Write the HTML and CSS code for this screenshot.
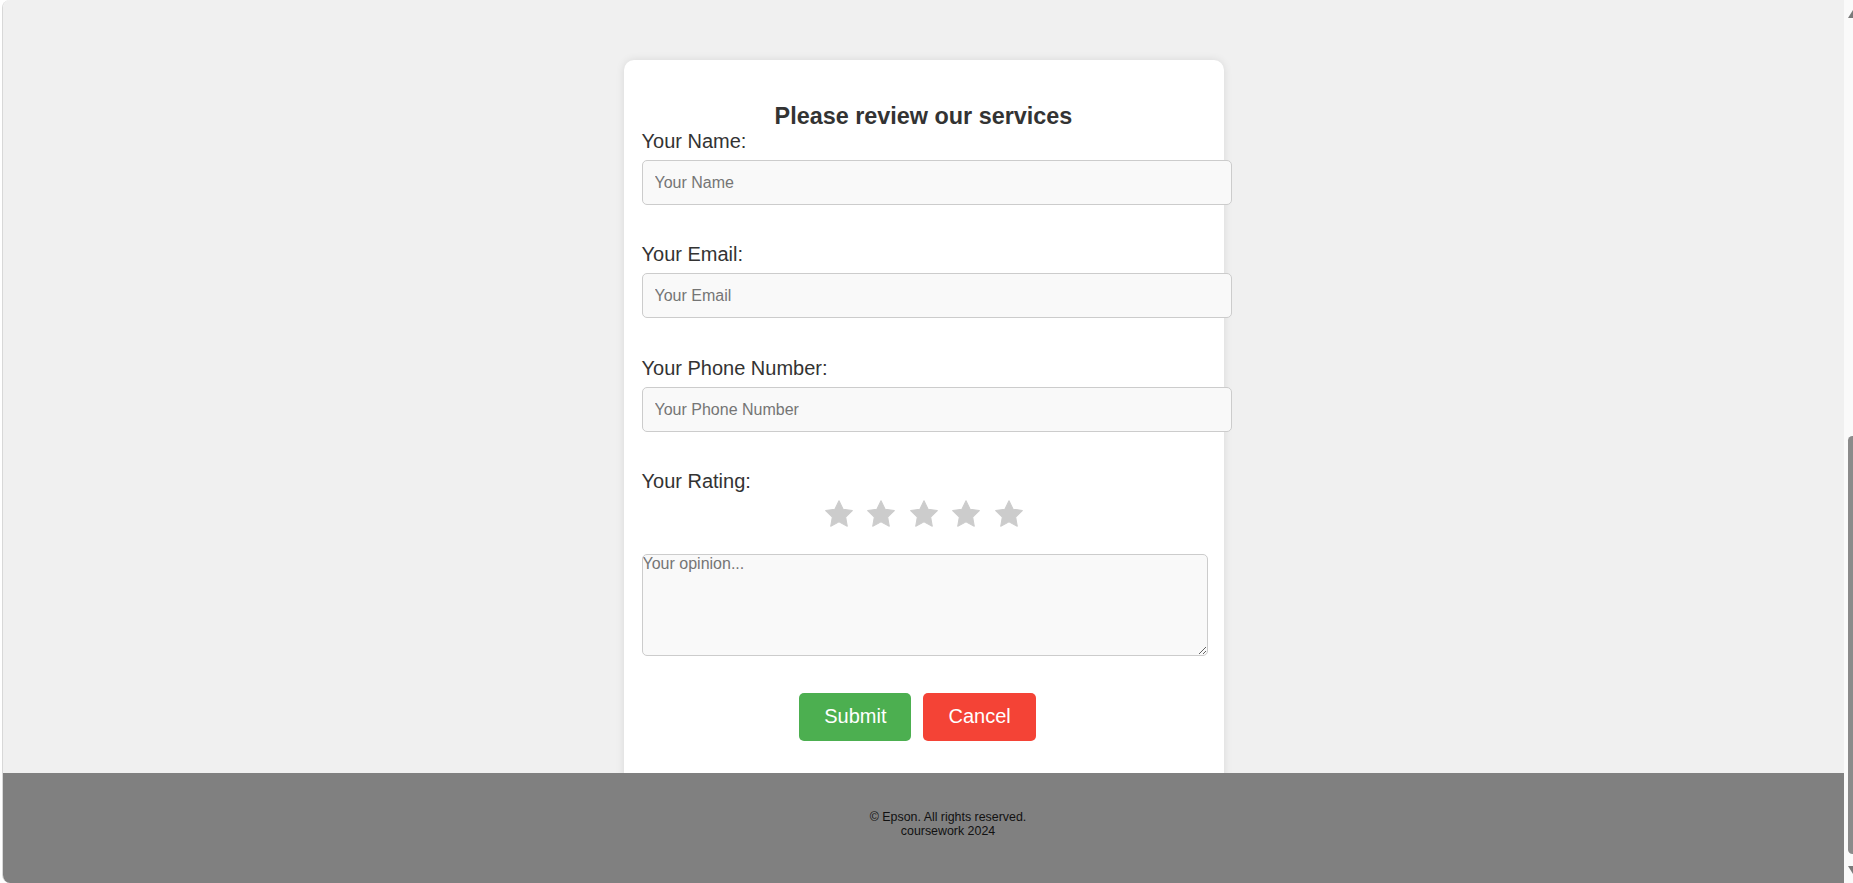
FILE: index.html
```html
<!DOCTYPE html>
<html lang="en">
<head>
<meta charset="utf-8">
<title>Review</title>
<link rel="stylesheet" href="styles.css">
</head>
<body>
  <div class="window">
    <main class="page">
      <div class="card">
        <h2 class="title">Please review our services</h2>
        <form class="form">
          <label class="label" for="name">Your Name:</label>
          <input class="field" id="name" type="text" placeholder="Your Name">
          <label class="label" for="email">Your Email:</label>
          <input class="field" id="email" type="email" placeholder="Your Email">
          <label class="label" for="phone">Your Phone Number:</label>
          <input class="field" id="phone" type="tel" placeholder="Your Phone Number">
          <label class="label">Your Rating:</label>
          <div class="stars">
            <svg class="star" viewBox="1.5 1.5 21 20"><path d="M12 2l3.09 6.26L22 9.27l-5 4.87 1.18 6.88L12 17.77l-6.18 3.25L7 14.14 2 9.27l6.91-1.01L12 2z"/></svg>
            <svg class="star" viewBox="1.5 1.5 21 20"><path d="M12 2l3.09 6.26L22 9.27l-5 4.87 1.18 6.88L12 17.77l-6.18 3.25L7 14.14 2 9.27l6.91-1.01L12 2z"/></svg>
            <svg class="star" viewBox="1.5 1.5 21 20"><path d="M12 2l3.09 6.26L22 9.27l-5 4.87 1.18 6.88L12 17.77l-6.18 3.25L7 14.14 2 9.27l6.91-1.01L12 2z"/></svg>
            <svg class="star" viewBox="1.5 1.5 21 20"><path d="M12 2l3.09 6.26L22 9.27l-5 4.87 1.18 6.88L12 17.77l-6.18 3.25L7 14.14 2 9.27l6.91-1.01L12 2z"/></svg>
            <svg class="star" viewBox="1.5 1.5 21 20"><path d="M12 2l3.09 6.26L22 9.27l-5 4.87 1.18 6.88L12 17.77l-6.18 3.25L7 14.14 2 9.27l6.91-1.01L12 2z"/></svg>
          </div>
          <textarea class="opinion" placeholder="Your opinion..."></textarea>
          <div class="buttons">
            <button class="btn btn-submit" type="submit">Submit</button>
            <button class="btn btn-cancel" type="button">Cancel</button>
          </div>
        </form>
      </div>
    </main>
    <footer class="footer">
      <div class="footer-text">© Epson. All rights reserved.<br>coursework 2024</div>
    </footer>
  </div>
  <div class="scrollbar">
    <div class="sb-up"></div>
    <div class="sb-thumb"></div>
    <div class="sb-down"></div>
  </div>
</body>
</html>
```
FILE: styles.css
```css
html, body {
  margin: 0;
  padding: 0;
}

body {
  display: flex;
  height: 883px;
  overflow: hidden;
  background: #ffffff;
  font-family: "Liberation Sans", Arial, sans-serif;
}

.window {
  flex-shrink: 0;
  width: 1841px;
  margin-left: 2px;
  border-left: 1px solid #d8d8d8;
  border-radius: 8px 0 0 8px;
  overflow: hidden;
  display: flex;
  flex-direction: column;
}

.page {
  height: 773px;
  flex-shrink: 0;
  box-sizing: border-box;
  padding-top: 60px;
  overflow: hidden;
  background: #f0f0f0;
  display: flex;
  justify-content: center;
  align-items: flex-start;
}

.card {
  width: 564px;
  padding: 18px 18px 80px;
  background: #ffffff;
  border-radius: 10px;
  box-shadow: 0 0 8px rgba(0, 0, 0, 0.1);
}

.title {
  margin: 24.5px 0 0;
  font-size: 23.4px;
  font-weight: bold;
  text-align: center;
  color: #333333;
  line-height: 27px;
}

.form {
  display: block;
}

.label {
  display: block;
  font-size: 20px;
  line-height: 23px;
  color: #333333;
  margin-bottom: 7px;
}

.field {
  display: block;
  width: 100%;
  box-sizing: content-box;
  padding: 12px;
  margin: 0 0 38.5px;
  border: 1px solid #cccccc;
  border-radius: 5px;
  background: #f9f9f9;
  font-family: "Liberation Sans", Arial, sans-serif;
  font-size: 16px;
  line-height: 19px;
  height: 19px;
  color: #333333;
  outline: none;
}

.field::placeholder {
  color: #757575;
}

.stars {
  display: flex;
  justify-content: center;
  gap: 14.5px;
  height: 27px;
  margin-top: 1.5px;
}

.star {
  width: 28px;
  height: 27px;
  fill: #cccccc;
  stroke: #cccccc;
  stroke-width: 0.8;
  stroke-linejoin: round;
}

.opinion {
  display: block;
  width: 100%;
  height: 100.5px;
  box-sizing: content-box;
  margin: 26.5px 0 0;
  padding: 0;
  border: 1px solid #cccccc;
  border-radius: 5px;
  background: #f9f9f9;
  font-family: "Liberation Sans", Arial, sans-serif;
  font-size: 16px;
  color: #333333;
  resize: vertical;
}

.opinion::placeholder {
  color: #757575;
}

.buttons {
  display: flex;
  justify-content: center;
  gap: 12px;
  padding-right: 12px;
  margin-top: 36.5px;
}

.btn {
  height: 48.5px;
  padding: 0 25px;
  border: none;
  border-radius: 5px;
  font-family: "Liberation Sans", Arial, sans-serif;
  font-size: 20px;
  color: #ffffff;
  cursor: pointer;
}

.btn-submit {
  background: #4caf50;
}

.btn-cancel {
  background: #f44336;
}

.footer {
  flex: 1;
  background: #808080;
  padding: 37px 0 0 49px;
  text-align: center;
}

.footer-text {
  font-size: 12.4px;
  line-height: 14px;
  color: #111111;
}

.scrollbar {
  flex-shrink: 0;
  width: 9px;
  height: 883px;
  overflow: hidden;
  background: #fafafa;
  display: flex;
  flex-direction: column;
}

.sb-up {
  width: 0;
  height: 0;
  margin: 10px 0 0 4px;
  border-left: 5px solid transparent;
  border-right: 5px solid transparent;
  border-bottom: 8px solid #7a7a7a;
  flex-shrink: 0;
}

.sb-thumb {
  flex-shrink: 0;
  width: 9px;
  height: 418px;
  margin: 418px 0 0 4px;
  background: #8b8b8b;
  border-radius: 5px;
}

.sb-down {
  width: 0;
  height: 0;
  margin: 12px 0 0 4px;
  border-left: 5px solid transparent;
  border-right: 5px solid transparent;
  border-top: 8px solid #7a7a7a;
  flex-shrink: 0;
}
```
